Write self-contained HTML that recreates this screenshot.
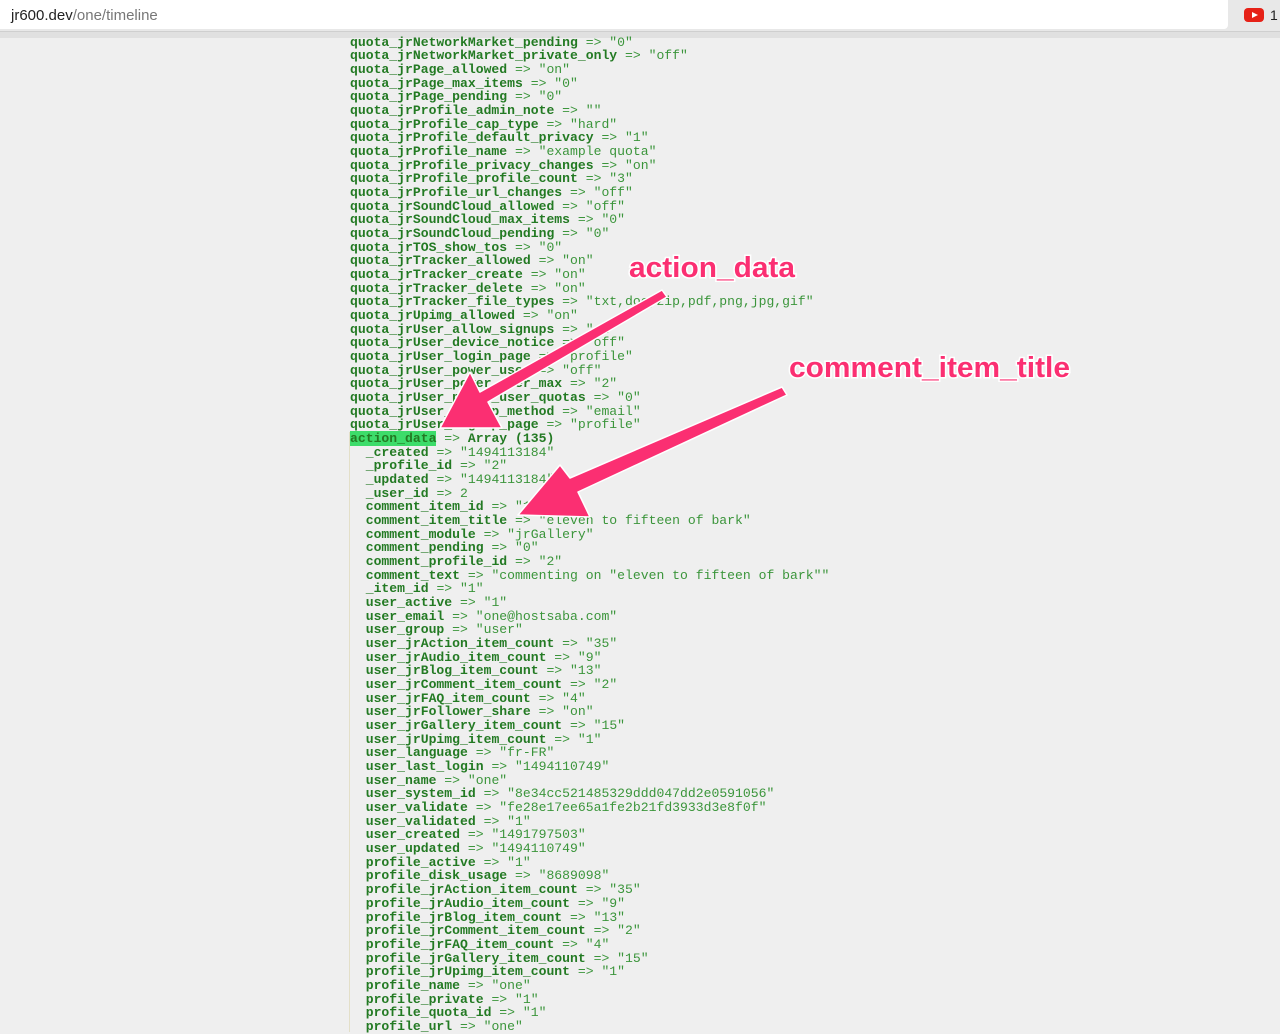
<!DOCTYPE html>
<html><head><meta charset="utf-8"><style>
html,body{margin:0;padding:0;width:1280px;height:1030px;overflow:hidden;background:#efefef;}
#bar{position:absolute;left:0;top:0;width:1280px;height:31px;background:#e8e8e8;border-bottom:1px solid #cfcfcf;}
#url{position:absolute;left:0;top:0;width:1228px;height:29px;background:#fff;border-radius:0 0 4px 0;font:15px "Liberation Sans",sans-serif;color:#222;line-height:31px;padding-left:11px;box-sizing:border-box;}
#url span{color:#777}
#strip{position:absolute;left:0;top:32px;width:1280px;height:6px;background:#e0e0e0;}
#yt{position:absolute;left:1244px;top:8px;width:20px;height:14px;background:#e62117;border-radius:4px;}
#yt:after{content:"";position:absolute;left:8px;top:4px;border-left:6px solid #fff;border-top:3px solid transparent;border-bottom:3px solid transparent;}
#n{position:absolute;left:1270px;top:7px;font:14px "Liberation Sans",sans-serif;color:#222}
#code{position:absolute;left:350px;top:35.5px;margin:0;font:13.1px/13.67px "Liberation Mono",monospace;color:#3b953b;white-space:pre;}
#code b{color:#237a23}
.hl{background:#3ddc6a}
#vl{position:absolute;left:349px;top:432px;width:1px;height:600px;background:#e3dfc8}
svg{position:absolute;left:0;top:0}
</style></head><body>
<div id="bar"><div id="url">jr600.dev<span>/one/timeline</span></div><div id="yt"></div><div id="n">1</div></div>
<div id="strip"></div>
<div id="vl"></div>
<pre id="code"><b>quota_jrNetworkMarket_pending</b> =&gt; "0"
<b>quota_jrNetworkMarket_private_only</b> =&gt; "off"
<b>quota_jrPage_allowed</b> =&gt; "on"
<b>quota_jrPage_max_items</b> =&gt; "0"
<b>quota_jrPage_pending</b> =&gt; "0"
<b>quota_jrProfile_admin_note</b> =&gt; ""
<b>quota_jrProfile_cap_type</b> =&gt; "hard"
<b>quota_jrProfile_default_privacy</b> =&gt; "1"
<b>quota_jrProfile_name</b> =&gt; "example quota"
<b>quota_jrProfile_privacy_changes</b> =&gt; "on"
<b>quota_jrProfile_profile_count</b> =&gt; "3"
<b>quota_jrProfile_url_changes</b> =&gt; "off"
<b>quota_jrSoundCloud_allowed</b> =&gt; "off"
<b>quota_jrSoundCloud_max_items</b> =&gt; "0"
<b>quota_jrSoundCloud_pending</b> =&gt; "0"
<b>quota_jrTOS_show_tos</b> =&gt; "0"
<b>quota_jrTracker_allowed</b> =&gt; "on"
<b>quota_jrTracker_create</b> =&gt; "on"
<b>quota_jrTracker_delete</b> =&gt; "on"
<b>quota_jrTracker_file_types</b> =&gt; "txt,doc,zip,pdf,png,jpg,gif"
<b>quota_jrUpimg_allowed</b> =&gt; "on"
<b>quota_jrUser_allow_signups</b> =&gt; "on"
<b>quota_jrUser_device_notice</b> =&gt; "off"
<b>quota_jrUser_login_page</b> =&gt; "profile"
<b>quota_jrUser_power_user</b> =&gt; "off"
<b>quota_jrUser_power_user_max</b> =&gt; "2"
<b>quota_jrUser_power_user_quotas</b> =&gt; "0"
<b>quota_jrUser_signup_method</b> =&gt; "email"
<b>quota_jrUser_signup_page</b> =&gt; "profile"
<b class="hl">action_data</b> =&gt; <b>Array (135)</b>
  <b>_created</b> =&gt; "1494113184"
  <b>_profile_id</b> =&gt; "2"
  <b>_updated</b> =&gt; "1494113184"
  <b>_user_id</b> =&gt; 2
  <b>comment_item_id</b> =&gt; "1"
  <b>comment_item_title</b> =&gt; "eleven to fifteen of bark"
  <b>comment_module</b> =&gt; "jrGallery"
  <b>comment_pending</b> =&gt; "0"
  <b>comment_profile_id</b> =&gt; "2"
  <b>comment_text</b> =&gt; "commenting on "eleven to fifteen of bark""
  <b>_item_id</b> =&gt; "1"
  <b>user_active</b> =&gt; "1"
  <b>user_email</b> =&gt; "one@hostsaba.com"
  <b>user_group</b> =&gt; "user"
  <b>user_jrAction_item_count</b> =&gt; "35"
  <b>user_jrAudio_item_count</b> =&gt; "9"
  <b>user_jrBlog_item_count</b> =&gt; "13"
  <b>user_jrComment_item_count</b> =&gt; "2"
  <b>user_jrFAQ_item_count</b> =&gt; "4"
  <b>user_jrFollower_share</b> =&gt; "on"
  <b>user_jrGallery_item_count</b> =&gt; "15"
  <b>user_jrUpimg_item_count</b> =&gt; "1"
  <b>user_language</b> =&gt; "fr-FR"
  <b>user_last_login</b> =&gt; "1494110749"
  <b>user_name</b> =&gt; "one"
  <b>user_system_id</b> =&gt; "8e34cc521485329ddd047dd2e0591056"
  <b>user_validate</b> =&gt; "fe28e17ee65a1fe2b21fd3933d3e8f0f"
  <b>user_validated</b> =&gt; "1"
  <b>user_created</b> =&gt; "1491797503"
  <b>user_updated</b> =&gt; "1494110749"
  <b>profile_active</b> =&gt; "1"
  <b>profile_disk_usage</b> =&gt; "8689098"
  <b>profile_jrAction_item_count</b> =&gt; "35"
  <b>profile_jrAudio_item_count</b> =&gt; "9"
  <b>profile_jrBlog_item_count</b> =&gt; "13"
  <b>profile_jrComment_item_count</b> =&gt; "2"
  <b>profile_jrFAQ_item_count</b> =&gt; "4"
  <b>profile_jrGallery_item_count</b> =&gt; "15"
  <b>profile_jrUpimg_item_count</b> =&gt; "1"
  <b>profile_name</b> =&gt; "one"
  <b>profile_private</b> =&gt; "1"
  <b>profile_quota_id</b> =&gt; "1"
  <b>profile_url</b> =&gt; "one"</pre>
<svg width="1280" height="1030">
<g fill="#fb2f72" stroke="#fff" stroke-width="1.5" stroke-linejoin="round">
<polygon points="662,290 667,297 488,402 502,428 440,428 470,372 480,392"/>
<polygon points="782,387 787,395 578,492 590,517 518,515 560,465 570,478"/>
</g>
<g font-family="'Liberation Sans',sans-serif" font-weight="bold" font-size="29" fill="#fb2f72" stroke="#fff" stroke-width="3" paint-order="stroke">
<text x="629" y="277" textLength="166" lengthAdjust="spacingAndGlyphs">action_data</text>
<text x="789" y="377" textLength="281" lengthAdjust="spacingAndGlyphs">comment_item_title</text>
</g>
</svg>
</body></html>
